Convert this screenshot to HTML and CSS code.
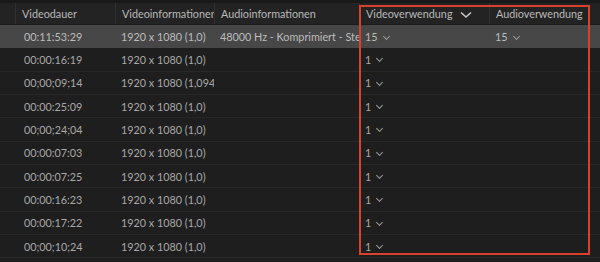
FILE: index.html
```html
<!DOCTYPE html>
<html>
  <head>
    <link rel="stylesheet" href="styles.css">
  </head>
  <body>
    <div class="panel">
      <div class="topband"></div>
      <div class="row head">
        <div class="cell"></div>
        <div class="cell">Videodauer</div>
        <div class="cell">Videoinformationen</div>
        <div class="cell">Audioinformationen</div>
        <div class="cell">Videoverwendung <svg class="sort" width="12" height="8" viewBox="0 0 12 8"><path d="M1 1.5 L6 6 L11 1.5" fill="none" stroke="#c8c8c8" stroke-width="1.6"/></svg></div>
        <div class="cell">Audioverwendung</div>
      </div>

      <div class="row selected">
        <div class="cell"></div>
        <div class="cell time">00:11:53:29</div>
        <div class="cell">1920 x 1080 (1,0)</div>
        <div class="cell">48000 Hz - Komprimiert - Stereo</div>
        <div class="cell">15 <span class="chev"></span></div>
        <div class="cell">15 <span class="chev"></span></div>
      </div>
      <div class="row">
        <div class="cell"></div>
        <div class="cell time">00:00:16:19</div>
        <div class="cell">1920 x 1080 (1,0)</div>
        <div class="cell"></div>
        <div class="cell">1 <span class="chev"></span></div>
        <div class="cell"></div>
      </div>
      <div class="row">
        <div class="cell"></div>
        <div class="cell time">00;00;09;14</div>
        <div class="cell">1920 x 1080 (1,0940)</div>
        <div class="cell"></div>
        <div class="cell">1 <span class="chev"></span></div>
        <div class="cell"></div>
      </div>
      <div class="row">
        <div class="cell"></div>
        <div class="cell time">00:00:25:09</div>
        <div class="cell">1920 x 1080 (1,0)</div>
        <div class="cell"></div>
        <div class="cell">1 <span class="chev"></span></div>
        <div class="cell"></div>
      </div>
      <div class="row">
        <div class="cell"></div>
        <div class="cell time">00;00;24;04</div>
        <div class="cell">1920 x 1080 (1,0)</div>
        <div class="cell"></div>
        <div class="cell">1 <span class="chev"></span></div>
        <div class="cell"></div>
      </div>
      <div class="row">
        <div class="cell"></div>
        <div class="cell time">00:00:07:03</div>
        <div class="cell">1920 x 1080 (1,0)</div>
        <div class="cell"></div>
        <div class="cell">1 <span class="chev"></span></div>
        <div class="cell"></div>
      </div>
      <div class="row">
        <div class="cell"></div>
        <div class="cell time">00:00:07:25</div>
        <div class="cell">1920 x 1080 (1,0)</div>
        <div class="cell"></div>
        <div class="cell">1 <span class="chev"></span></div>
        <div class="cell"></div>
      </div>
      <div class="row">
        <div class="cell"></div>
        <div class="cell time">00:00:16:23</div>
        <div class="cell">1920 x 1080 (1,0)</div>
        <div class="cell"></div>
        <div class="cell">1 <span class="chev"></span></div>
        <div class="cell"></div>
      </div>
      <div class="row">
        <div class="cell"></div>
        <div class="cell time">00:00:17:22</div>
        <div class="cell">1920 x 1080 (1,0)</div>
        <div class="cell"></div>
        <div class="cell">1 <span class="chev"></span></div>
        <div class="cell"></div>
      </div>
      <div class="row">
        <div class="cell"></div>
        <div class="cell time">00;00;10;24</div>
        <div class="cell">1920 x 1080 (1,0)</div>
        <div class="cell"></div>
        <div class="cell">1 <span class="chev"></span></div>
        <div class="cell"></div>
      </div>

      <div class="highlight"></div>
    </div>
  </body>
</html>
```
FILE: styles.css
```css
body {
  margin: 0;
  background-color: #1e1e1e;
}
.panel {
  position: relative;
  width: 600px;
  height: 262px;
  overflow: hidden;
  font-family: "Lato", "Open Sans", sans-serif;
  font-size: 10.8px;
  color: #a9a9a9;
}
.topband {
  height: 3px;
  background-color: #191919;
}
.row {
  display: grid;
  grid-template-columns: 15px 100px 99px 145px 130px 1fr;
  height: 23.33px;
  border-bottom: 1px solid #282828;
  box-sizing: border-box;
}
.cell {
  display: flex;
  align-items: center;
  gap: 3px;
  padding-left: 6px;
  white-space: nowrap;
  overflow: hidden;
}
.cell.time {
  padding-left: 9px;
}
.head {
  height: 22px;
  background-color: #232323;
  color: #bababa;
  border-bottom: 1px solid #1b1b1b;
}
.head .cell {
  border-left: 1px solid #303030;
  padding-left: 6px;
}
.head .cell:first-child {
  border-left: none;
}
.head .sort {
  margin-left: 4px;
  margin-top: 2px;
}
.selected {
  background-color: #474747;
  color: #bdbdbd;
  border-bottom: none;
}
.chev {
  width: 4px;
  height: 4px;
  border-right: 1.2px solid #9a9a9a;
  border-bottom: 1.2px solid #9a9a9a;
  transform: rotate(45deg);
  margin-top: -1px;
  margin-left: 3px;
}
.highlight {
  position: absolute;
  left: 359px;
  top: 5px;
  width: 231px;
  height: 250px;
  border: 2px solid #d8412c;
  box-sizing: border-box;
}
```
